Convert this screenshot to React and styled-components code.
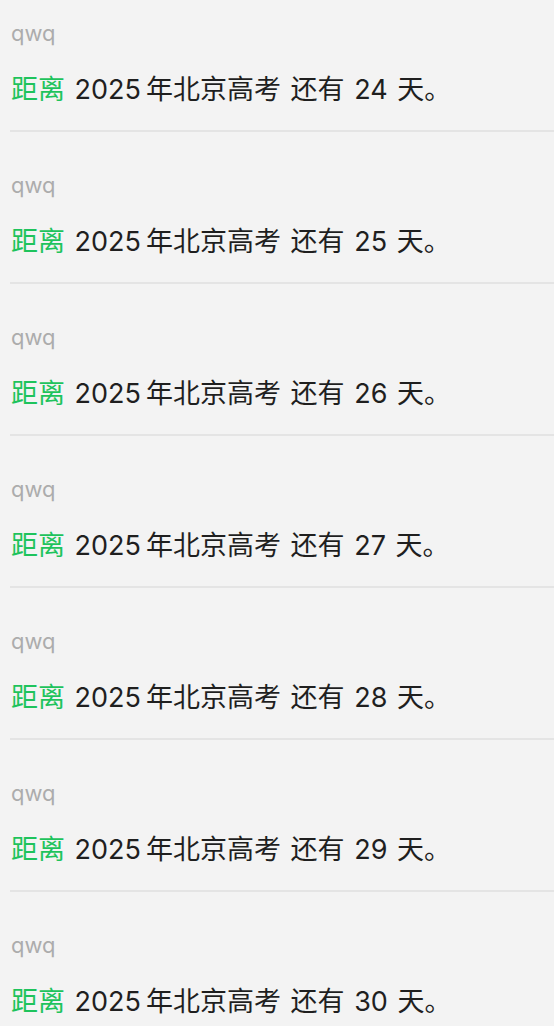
import styled, { createGlobalStyle } from 'styled-components'

const GlobalStyle = createGlobalStyle`
  html, body {
    margin: 0;
    padding: 0;
    background: #f3f3f3;
  }
  body {
    font-family: "Inter", "Noto Sans CJK SC", sans-serif;
  }
`;

const List = styled.div`
  display: flex;
  flex-direction: column;
  padding-left: 10px;
`;

const Item = styled.div`
  display: flex;
  flex-direction: column;
  padding: 38px 0 22px 1px;
  border-bottom: 2px solid #e4e4e4;

  &:first-child {
    padding-top: 18px;
  }
`;

const Author = styled.div`
  font-size: 22px;
  line-height: 30px;
  color: #acacac;
`;

const Message = styled.div`
  margin-top: 23px;
  font-size: 27px;
  line-height: 37px;
  word-spacing: 2px;
  color: #1f1f1f;
`;

const Hl = styled.span`
  color: #1ec35c;
`;

// small gap between a number and the CJK text after it
const Num = styled.span`
  margin-right: 5px;
`;

const days = [24, 25, 26, 27, 28, 29, 30];

function App() {
  return (
    <>
      <GlobalStyle />
      <List>
        {days.map((d) => (
          <Item key={d}>
            <Author>qwq</Author>
            <Message>
              <Hl>距离</Hl> <Num>2025</Num>年北京高考 还有 {d} 天。
            </Message>
          </Item>
        ))}
      </List>
    </>
  );
}

export default App;
